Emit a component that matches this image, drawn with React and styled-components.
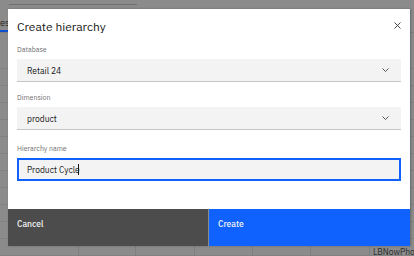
import React from "react";
import styled, { createGlobalStyle } from "styled-components";

const Global = createGlobalStyle`
  html, body { margin: 0; padding: 0; }
  body {
    width: 414px; height: 256px; overflow: hidden;
    font-family: "IBM Plex Sans", Roboto, "Noto Sans", sans-serif;
    background: #8a8a8a;
  }
`;

const Page = styled.div`
  position: relative;
  width: 414px;
  height: 256px;
  background: #8b8b8b;
  overflow: hidden;
`;

const TopLine = styled.div`
  margin: 4px 0 0 9px;
  width: 128px;
  height: 1px;
  background: #6f6f6f;
`;

const TabRow = styled.div`
  display: flex;
  height: 27px;
  border-bottom: 1px solid #7f7f7f;
`;

const Tab = styled.div`
  width: 8px;
  display: flex;
  align-items: flex-end;
  justify-content: flex-end;
  padding-bottom: 2px;
  box-sizing: border-box;
  font-size: 9px;
  line-height: 10px;
  color: #1f1f1f;
  overflow: hidden;
  white-space: nowrap;
  border-bottom: 2px solid #0d4fd0;
  direction: rtl;
`;

const Rows = styled.div`
  display: flex;
  flex-direction: column;
  margin-top: 19px;
`;

const Row = styled.div`
  height: 16px;
  border-bottom: 1px solid #828282;
`;

const BottomCells = styled.div`
  position: absolute;
  left: 0;
  right: 0;
  bottom: 0;
  height: 10px;
  display: grid;
  grid-template-columns: 79px 57px 59px 58px 58px 59px 1fr;
`;

const Cell = styled.div`
  border-right: 1px solid #7e7e7e;
  font-size: 8.5px;
  line-height: 12px;
  color: #2b2b2b;
  padding-left: 3px;
  white-space: nowrap;
  overflow: hidden;
  &:last-child { border-right: none; }
`;

const Modal = styled.div`
  position: absolute;
  left: 8px;
  top: 9px;
  width: 402px;
  height: 237px;
  background: #ffffff;
  display: flex;
  flex-direction: column;
  box-shadow: 1px 0 2px rgba(0, 0, 0, 0.25);
`;

const Body = styled.div`
  flex: 1;
  padding: 9px 9px 0 9px;
  display: flex;
  flex-direction: column;
`;

const Header = styled.div`
  display: flex;
  align-items: flex-start;
  justify-content: space-between;
  height: 27px;
`;

const Title = styled.h2`
  margin: 0;
  font-size: 12px;
  line-height: 18px;
  font-weight: 400;
  color: #161616;
`;

const Close = styled.button`
  border: 0;
  background: transparent;
  padding: 0;
  margin: 1px -2px 0 0;
  width: 12px;
  height: 12px;
  display: flex;
  align-items: center;
  justify-content: center;
`;

const Field = styled.div`
  display: flex;
  flex-direction: column;
  margin-top: ${(p) => p.$gap}px;
`;

const Label = styled.label`
  font-size: 7px;
  line-height: 10px;
  color: #6f6f6f;
  margin-bottom: 4px;
`;

const Select = styled.div`
  height: 22px;
  background: #f3f3f3;
  border-bottom: 1px solid #c6c6c6;
  display: flex;
  align-items: center;
  justify-content: space-between;
  padding: 0 12px 0 10px;
  font-size: 8.5px;
  color: #161616;
`;

const Input = styled.div`
  height: 19px;
  background: #f3f3f3;
  border: 2px solid #0f62fe;
  display: flex;
  align-items: center;
  padding: 0 8px;
  font-size: 8.5px;
  color: #161616;
`;

const Caret = styled.span`
  display: inline-block;
  width: 1px;
  height: 11px;
  background: #161616;
  margin-left: -2px;
`;

const Footer = styled.div`
  display: grid;
  grid-template-columns: 200px 201px;
  column-gap: 1px;
  height: 37px;
  background: #8b8b8b;
`;

const FooterButton = styled.button`
  border: 0;
  margin: 0;
  padding: 9px 9px 0 9px;
  text-align: left;
  display: flex;
  align-items: flex-start;
  font-family: inherit;
  font-size: 8.5px;
  line-height: 12px;
  font-weight: 500;
  color: #f4f4f4;
  background: ${(p) => (p.$primary ? "#0f62fe" : "#4c4c4c")};
`;

const Chevron = () => (
  <svg width="7" height="4" viewBox="0 0 7 4" fill="none">
    <path d="M0.5 0.5 L3.5 3.5 L6.5 0.5" stroke="#444" strokeWidth="0.9" />
  </svg>
);

const CloseIcon = () => (
  <svg width="7" height="7" viewBox="0 0 7 7" fill="none">
    <path d="M0.5 0.5 L6.5 6.5 M6.5 0.5 L0.5 6.5" stroke="#333" strokeWidth="0.9" />
  </svg>
);

export default function App() {
  return (
    <>
      <Global />
      <Page>
        <TopLine />
        <TabRow>
          <Tab>es</Tab>
        </TabRow>
        <Rows>
          {Array.from({ length: 12 }).map((_, i) => (
            <Row key={i} />
          ))}
        </Rows>
        <BottomCells>
          <Cell />
          <Cell />
          <Cell />
          <Cell />
          <Cell />
          <Cell />
          <Cell>LBNowPhone</Cell>
        </BottomCells>
        <Modal>
          <Body>
            <Header>
              <Title>Create hierarchy</Title>
              <Close aria-label="Close">
                <CloseIcon />
              </Close>
            </Header>
            <Field $gap={0}>
              <Label>Database</Label>
              <Select>
                <span>Retail 24</span>
                <Chevron />
              </Select>
            </Field>
            <Field $gap={11}>
              <Label>Dimension</Label>
              <Select>
                <span>product</span>
                <Chevron />
              </Select>
            </Field>
            <Field $gap={14}>
              <Label>Hierarchy name</Label>
              <Input>
                <span>Product Cycle</span>
                <Caret />
              </Input>
            </Field>
          </Body>
          <Footer>
            <FooterButton>Cancel</FooterButton>
            <FooterButton $primary>Create</FooterButton>
          </Footer>
        </Modal>
      </Page>
    </>
  );
}
